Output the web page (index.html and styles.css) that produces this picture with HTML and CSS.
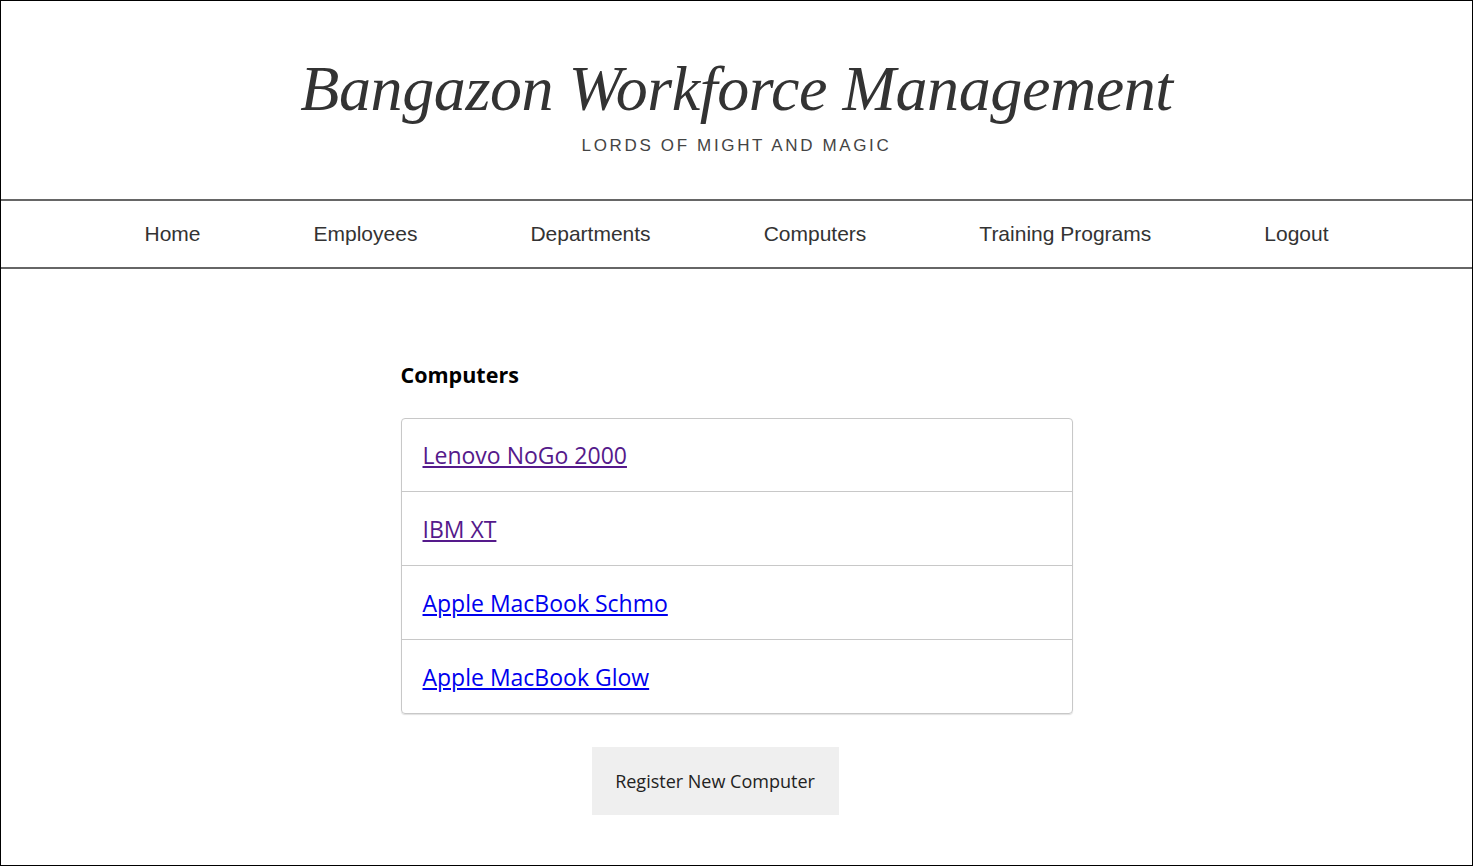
FILE: index.html
```html
<!DOCTYPE html>
<html lang="en">
<head>
<meta charset="utf-8">
<title>Bangazon Workforce Management</title>
<link rel="stylesheet" href="styles.css">
</head>
<body>
<div class="frame">
  <header class="masthead">
    <h1 class="title">Bangazon Workforce Management</h1>
    <p class="subtitle">LORDS OF MIGHT AND MAGIC</p>
  </header>
  <nav class="nav">
    <a class="nav-link" href="#">Home</a>
    <a class="nav-link" href="#">Employees</a>
    <a class="nav-link" href="#">Departments</a>
    <a class="nav-link" href="#">Computers</a>
    <a class="nav-link" href="#">Training Programs</a>
    <a class="nav-link" href="#">Logout</a>
  </nav>
  <main class="content">
    <h2 class="section-title">Computers</h2>
    <ul class="list">
      <li class="list-item"><a class="item-link visited" href="#">Lenovo NoGo 2000</a></li>
      <li class="list-item"><a class="item-link visited" href="#">IBM XT</a></li>
      <li class="list-item"><a class="item-link" href="#">Apple MacBook Schmo</a></li>
      <li class="list-item"><a class="item-link" href="#">Apple MacBook Glow</a></li>
    </ul>
    <div class="actions">
      <button class="btn" type="button">Register New Computer</button>
    </div>
  </main>
</div>
</body>
</html>
```
FILE: styles.css
```css
html, body {
  margin: 0;
  padding: 0;
  background: #fff;
}

.frame {
  box-sizing: border-box;
  width: 1473px;
  height: 866px;
  border: 1px solid #000;
  overflow: hidden;
}

.masthead {
  text-align: center;
  padding-top: 52px;
  height: 147px;
  box-sizing: border-box;
}

.title {
  margin: 0;
  font-family: "Liberation Serif", serif;
  font-style: italic;
  font-weight: normal;
  font-size: 64px;
  letter-spacing: -0.4px;
  line-height: 72px;
  color: #333;
}

.subtitle {
  margin: 11px 0 0;
  font-family: "Liberation Sans", Arial, sans-serif;
  font-size: 17px;
  letter-spacing: 2.65px;
  color: #444;
}

.nav {
  display: flex;
  justify-content: center;
  gap: 113px;
  border-top: 2px solid #666;
  border-bottom: 2px solid #666;
  height: 70px;
  box-sizing: border-box;
  align-items: center;
  margin-top: 51px;
}

.nav-link {
  font-family: "Liberation Sans", Arial, sans-serif;
  font-size: 21px;
  color: #333;
  text-decoration: none;
}

.content {
  width: 672px;
  margin: 0 auto;
  padding-top: 91px;
  font-family: "Open Sans", "Noto Sans", sans-serif;
}

.section-title {
  margin: 0 0 28px;
  font-size: 21.5px;
  font-weight: 700;
  color: #000;
  line-height: 30px;
}

.list {
  list-style: none;
  margin: 0;
  padding: 0;
  border: 1px solid #c8c8c8;
  border-radius: 4px;
  box-shadow: 0 1px 1px rgba(0,0,0,0.12);
}

.list-item {
  height: 73px;
  display: flex;
  align-items: center;
  padding: 0 21px;
  border-top: 1px solid #c8c8c8;
}

.list-item:first-child {
  border-top: none;
  height: 72px;
}

.item-link {
  font-size: 23px;
  color: #0000ee;
  text-decoration: underline;
}

.item-link.visited {
  color: #551a8b;
}

.actions {
  display: flex;
  justify-content: center;
  padding-top: 33px;
  padding-right: 43px;
}

.btn {
  font-family: "Open Sans", "Noto Sans", sans-serif;
  font-size: 18px;
  color: #222;
  background: #efefef;
  border: none;
  width: 247px;
  height: 68px;
  cursor: pointer;
}
```
